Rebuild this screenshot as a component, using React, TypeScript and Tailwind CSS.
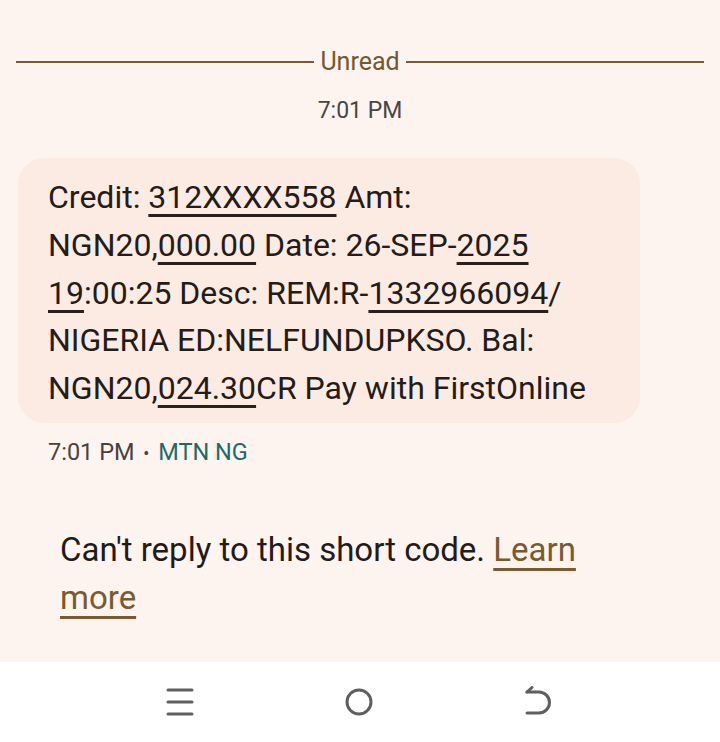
import React from "react";

const U = ({ children }: { children: React.ReactNode }) => (
  <span className="underline decoration-[3px] underline-offset-[6px] decoration-[#2b211c]">{children}</span>
);

const L = ({ children }: { children: React.ReactNode }) => (
  <span className="text-[#7a5a2e] underline decoration-[3px] underline-offset-[7px] decoration-[#7a5a2e]">{children}</span>
);

export default function App() {
  return (
    <div className="w-[720px] h-[742px] flex flex-col bg-[#fdf4ef] overflow-hidden" style={{ fontFamily: "Roboto, 'Noto Sans', sans-serif" }}>
      <div className="flex-1 flex flex-col">
        <div className="flex items-center px-4 pt-[47px]">
          <div className="flex-1 h-[2px] bg-[#7a5b33]" />
          <span className="px-[6px] text-[25px] leading-[30px] text-[#74582f]">Unread</span>
          <div className="flex-1 h-[2px] bg-[#7a5b33]" />
        </div>
        <div className="text-center text-[23px] leading-[30px] text-[#4a4542] mt-[19px]">7:01 PM</div>
        <div className="mt-[32px] ml-[18px] w-[622px] rounded-[26px] bg-[#fcebe2] pl-[30px] pr-[16px] pt-[16px] pb-[10px] text-[32px] leading-[47.75px] text-[#231c19]">
          Credit: <U>312XXXX558</U> Amt:<br />
          NGN20,<U>000.00</U> Date: 26-SEP-<U>2025</U><br />
          <U>19</U>:00:25 Desc: REM:R-<U>1332966094</U>/<br />
          NIGERIA ED:NELFUNDUPKSO. Bal:<br />
          NGN20,<U>024.30</U>CR Pay with FirstOnline
        </div>
        <div className="pl-[48px] mt-[14px] text-[23.5px] leading-[30px] text-[#48423f]">
          7:01 PM <span className="mx-[3px] text-[18px]">•</span> <span className="text-[#1d6b66]">MTN NG</span>
        </div>
        <div className="pl-[60px] pr-[76px] mt-[57px] text-[33px] leading-[48px] text-[#221b18]">
          <span>Can't reply to this short code.</span> <L>Learn</L>
          <br />
          <L>more</L>
        </div>
      </div>
      <div className="h-[80px] bg-white flex items-center justify-between px-[166px]">
        <svg width="28" height="30" viewBox="0 0 28 30" className="text-[#5f5f5f]">
          <g stroke="currentColor" strokeWidth="3" strokeLinecap="round">
            <line x1="2" y1="3" x2="26" y2="3" />
            <line x1="2" y1="15" x2="26" y2="15" />
            <line x1="2" y1="27" x2="26" y2="27" />
          </g>
        </svg>
        <svg width="30" height="30" viewBox="0 0 30 30" className="text-[#5f5f5f]">
          <circle cx="15" cy="15" r="12" fill="none" stroke="currentColor" strokeWidth="3" />
        </svg>
        <svg width="30" height="32" viewBox="0 0 30 32" className="text-[#5f5f5f]">
          <g stroke="currentColor" strokeWidth="3" fill="none" strokeLinecap="round" strokeLinejoin="round">
            <path d="M3 6 H15 A10.5 10.5 0 0 1 15 27 H3" />
            <path d="M3 6 L8 1.5" />
          </g>
        </svg>
      </div>
    </div>
  );
}
